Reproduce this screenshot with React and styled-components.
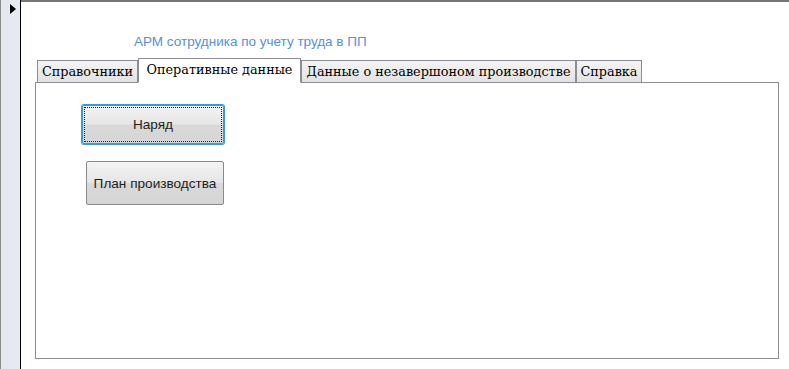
import React from "react"
import styled, { createGlobalStyle } from "styled-components"

const tabs = [
    { label: "Справочники", width: 101 },
    { label: "Оперативные данные", width: 163, active: true },
    { label: "Данные о незавершоном производстве", width: 275 },
    { label: "Справка", width: 66 },
]

const App = () => {
    return (
        <>
            <Global />
            <Frame>
                <Selector>
                    <Arrow />
                </Selector>
                <Main>
                    <Title>АРМ сотрудника по учету труда в ПП</Title>
                    <TabRow>
                        {tabs.map((t) => (
                            <Tab key={t.label} $active={t.active} $width={t.width}>
                                {t.label}
                            </Tab>
                        ))}
                    </TabRow>
                    <Panel>
                        <Buttons>
                            <Button $focused $width={142} $height={39}>Наряд</Button>
                            <Button $width={138} $height={44}>План производства</Button>
                        </Buttons>
                    </Panel>
                </Main>
            </Frame>
        </>
    )
}
export default App

const Global = createGlobalStyle`
    html, body {
        margin: 0;
        padding: 0;
        background: #ffffff;
    }
    body {
        font-family: "Liberation Sans", Arial, sans-serif;
    }
`;

const Frame = styled.div`
    display: flex;
    width: 789px;
    height: 369px;
    overflow: hidden;
`;

const Selector = styled.div`
    flex: none;
    background: #e6e9ef;
    border-left: 1px solid #8a8a8a;
    border-right: 1px solid #000000;
    box-sizing: border-box;
    width: 21px;
    padding: 4px 0 0 9px;
`;

const Arrow = styled.div`
    width: 0;
    height: 0;
    border-top: 5px solid transparent;
    border-bottom: 5px solid transparent;
    border-left: 6px solid #000;
`;

const Main = styled.div`
    flex: 1;
    border-top: 2px solid #777777;
    padding: 0 10px 0 14px;
    display: flex;
    flex-direction: column;
`;

const Title = styled.div`
    margin: 31px 0 0 99px;
    height: 18px;
    font-size: 13.5px;
    color: #5a8fd8;
    line-height: 18px;
`;

const TabRow = styled.div`
    display: flex;
    align-items: flex-end;
    margin: 7px 0 0 2px;
    position: relative;
    z-index: 1;
`;

const Tab = styled.div`
    box-sizing: border-box;
    width: ${(p) => p.$width}px;
    height: ${(p) => (p.$active ? 25 : 22)}px;
    margin-bottom: ${(p) => (p.$active ? -1 : 0)}px;
    border: 1px solid #8c8c94;
    border-bottom: ${(p) => (p.$active ? "1px solid #ffffff" : "none")};
    background: ${(p) => (p.$active ? "#ffffff" : "linear-gradient(#f4f4f4, #e2e2e2)")};
    font-family: "DejaVu Serif", "Liberation Serif", serif;
    font-size: 12.8px;
    color: #000;
    text-align: center;
    line-height: ${(p) => (p.$active ? 22 : 21)}px;
    white-space: nowrap;
    overflow: hidden;
`;

const Panel = styled.div`
    height: 277px;
    border: 1px solid #8c8c94;
    box-sizing: border-box;
    padding: 22px 0 0 46px;
`;

const Buttons = styled.div`
    width: 142px;
    display: flex;
    flex-direction: column;
    align-items: flex-end;
    gap: 17px;
`;

const Button = styled.button`
    box-sizing: border-box;
    width: ${(p) => p.$width}px;
    height: ${(p) => p.$height}px;
    border: 1px solid ${(p) => (p.$focused ? "#3a9ad9" : "#8a8a8a")};
    border-radius: 2px;
    background: linear-gradient(#f3f3f3 0%, #e6e6e6 48%, #d9d9d9 52%, #d5d5d5 100%);
    font-family: "Liberation Sans", Arial, sans-serif;
    font-size: 13.6px;
    color: #1e1e1e;
    padding: 0;
    outline: ${(p) => (p.$focused ? "1px dotted #222" : "none")};
    outline-offset: -3px;
    box-shadow: ${(p) => (p.$focused ? "0 0 0 1px #3a9ad9" : "none")};
`;
